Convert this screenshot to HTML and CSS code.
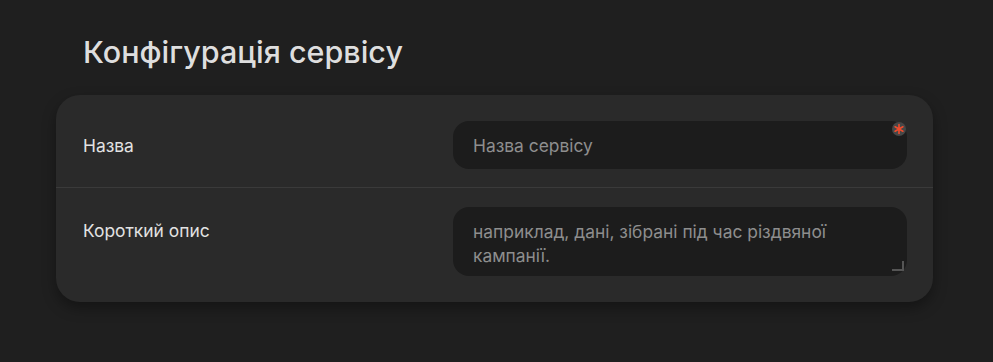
FILE: index.html
```html
<!DOCTYPE html>
<html lang="uk">

<head>
    <meta charset="UTF-8">
    <meta name="viewport" content="width=device-width, initial-scale=1.0">
    <title>Конфігурація сервісу</title>
    <link rel="stylesheet" href="styles.css">
</head>

<body>
    <main class="page">
        <h1 class="page-title">Конфігурація сервісу</h1>
        <section class="card">
            <div class="row row-name">
                <label class="row-label" for="name">Назва</label>
                <div class="field">
                    <input class="input" id="name" type="text" placeholder="Назва сервісу">
                    <span class="required" title="Обов'язкове поле">
                        <svg viewBox="0 0 14 14" width="14" height="14">
                            <path d="M7 2.5v9M3.1 4.75l7.8 4.5M10.9 4.75l-7.8 4.5" />
                        </svg>
                    </span>
                </div>
            </div>
            <div class="row row-desc">
                <label class="row-label" for="desc">Короткий опис</label>
                <div class="field">
                    <textarea class="input textarea" id="desc" placeholder="наприклад, дані, зібрані під час різдвяної кампанії."></textarea>
                    <span class="grip"></span>
                </div>
            </div>
        </section>
    </main>
</body>

</html>
```

FILE: styles.css
```css
html {
    box-sizing: border-box;
    font-family: Inter, "Noto Sans", sans-serif;
    font-size: 17.4px;
}

*,
*::before,
*::after {
    box-sizing: inherit;
}

body {
    margin: 0;
    min-height: 100vh;
    background-color: #1f1f1f;
    color: #dcdcdc;
}

.page {
    padding: 32px 60px 0 56px;
}

.page-title {
    margin: 0 0 23px 27px;
    font-size: 30.5px;
    font-weight: 500;
    line-height: 40px;
    color: #dedede;
}

.card {
    width: 877px;
    background-color: #2a2a2a;
    border-radius: 24px;
    padding: 6px 0;
    box-shadow: 0 6px 14px rgba(0, 0, 0, .35);
}

.row {
    display: grid;
    grid-template-columns: 1fr 454px;
    padding: 20px 26px 18px 27px;
}

.row-name {
    align-items: center;
    border-bottom: 1px solid #3a3a3a;
}

.row-desc {
    padding-top: 19px;
    padding-bottom: 20px;
}

.row-desc .row-label {
    padding-top: 12px;
    line-height: 24px;
}

.row-label {
    color: #e2e2e2;
}

.field {
    position: relative;
}

.input {
    display: block;
    width: 100%;
    height: 48px;
    border: none;
    border-radius: 16px;
    background-color: #1c1c1c;
    color: #e0e0e0;
    font-family: inherit;
    font-size: 17.4px;
    padding: 0 20px;
    outline: none;
}

.input::placeholder {
    color: #8e8e8e;
}

.textarea {
    height: 69px;
    padding: 13px 20px;
    line-height: 24px;
    resize: none;
}

.grip {
    position: absolute;
    right: 3px;
    bottom: 5px;
    width: 12px;
    height: 10px;
    border-right: 2px solid #555;
    border-bottom: 2px solid #555;
}

.required {
    position: absolute;
    top: 1px;
    right: 1px;
    width: 14px;
    height: 14px;
    border-radius: 50%;
    background-color: #474747;
}

.required svg {
    display: block;
    fill: none;
    stroke: #f04b2c;
    stroke-width: 1.6;
    stroke-linecap: round;
}
```
